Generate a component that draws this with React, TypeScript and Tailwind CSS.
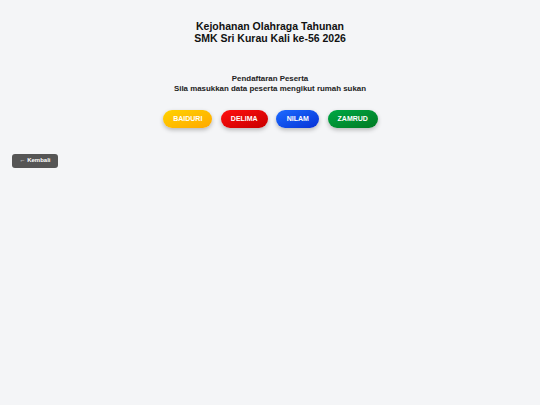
import React from "react";

const houses = [
  { name: "BAIDURI", cls: "bg-gradient-to-br from-[#ffd200] to-[#ffa800] w-[49px]" },
  { name: "DELIMA", cls: "bg-gradient-to-br from-[#ff1010] to-[#c80000] w-[47px]" },
  { name: "NILAM", cls: "bg-gradient-to-br from-[#1f6bff] to-[#0a2fd6] w-[43px]" },
  { name: "ZAMRUD", cls: "bg-gradient-to-br from-[#00a845] to-[#007a22] w-[50px]" },
];

export default function App() {
  return (
    <div className="min-h-[405px] w-[540px] bg-[#f4f5f7] font-['Liberation_Sans',Arial,sans-serif] text-[#111]">
      <div className="pt-[20px] text-center text-[10.5px] font-bold leading-[12px]">
        <div>Kejohanan Olahraga Tahunan</div>
        <div>SMK Sri Kurau Kali ke-56 2026</div>
      </div>
      <div className="mt-[30px] text-center text-[7.9px] font-bold leading-[10px] text-[#222]">
        <div>Pendaftaran Peserta</div>
        <div>Sila masukkan data peserta mengikut rumah sukan</div>
      </div>
      <div className="mt-[16px] flex justify-center gap-[8.5px] pl-[1px]">
        {houses.map((h) => (
          <button
            key={h.name}
            className={`${h.cls} h-[18px] rounded-full text-[7px] font-bold text-white shadow-[0_2px_4px_rgba(0,0,0,0.25)]`}
          >
            {h.name}
          </button>
        ))}
      </div>
      <div className="mt-[17px] pl-[12px]">
        <button className="h-[14px] w-[46px] rounded-[3px] bg-[#555] text-[6px] font-bold text-white">
          ← Kembali
        </button>
      </div>
    </div>
  );
}
